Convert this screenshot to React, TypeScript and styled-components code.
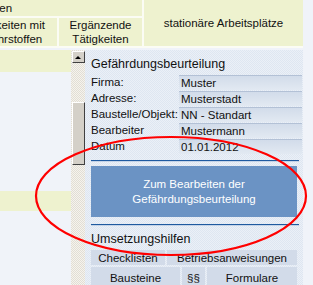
import { Fragment } from "react";
import styled, { createGlobalStyle } from "styled-components";

const GlobalStyle = createGlobalStyle`
  html, body {
    margin: 0;
    padding: 0;
    background: #f0f3f9;
  }
  body {
    font-family: "Liberation Sans", Arial, sans-serif;
    font-size: 11.5px;
    color: #111;
  }
`

const Screen = styled.div`
  position: relative;
  width: 313px;
  height: 285px;
  overflow: hidden;
  background: #f0f3f9;
`

// the table header is wider than the window, its left part is cut off
const Header = styled.div`
  display: grid;
  grid-template-columns: 130px 99px 83px 159px;
  grid-template-rows: 16px 28px;
  gap: 2px;
  margin-left: -174px;
  width: 477px;
  background: #fbfcf4;
  border-bottom: 2px solid #fbfcf4;
`

const HeadCell = styled.div<{ $span?: number }>`
  grid-column: span ${p => p.$span || 1};
  background: #eef2cf;
  display: flex;
  align-items: center;
  justify-content: center;
  text-align: center;
  line-height: 14px;
  white-space: nowrap;
`

const TallHeadCell = styled(HeadCell)`
  grid-column: 4;
  grid-row: 1 / 3;
`

const Body = styled.div`
  display: flex;
  flex-direction: row;
  height: 239px;
  padding-top: 2px;
`

const LeftTable = styled.div`
  width: 71px;
  display: flex;
  flex-direction: column;
  gap: 1px;
`

const Row = styled.div<{ $h: number; $yellow?: boolean }>`
  height: ${p => p.$h}px;
  flex-shrink: 0;
  background: ${p => (p.$yellow ? "#eef2cf" : "#f0f3f9")};
`

const ScrollTrack = styled.div`
  width: 14px;
  display: flex;
  flex-direction: column;
  align-items: center;
  padding-top: 1px;
  background-color: #f5f3ee;
  background-image: conic-gradient(#e2ded4 25%, transparent 0 50%, #e2ded4 0 75%, transparent 0);
  background-size: 2px 2px;
`

const ScrollButton = styled.div`
  width: 13px;
  height: 12px;
  box-sizing: border-box;
  background: #d4d0c8;
  border-top: 1px solid #fff;
  border-left: 1px solid #fff;
  border-right: 1px solid #404040;
  border-bottom: 1px solid #404040;
  display: flex;
  align-items: center;
  justify-content: center;
  &::after {
    content: "";
    border-left: 3px solid transparent;
    border-right: 3px solid transparent;
    border-bottom: 3px solid #000;
  }
`

const ScrollThumb = styled.div`
  width: 13px;
  height: 63px;
  margin-top: 39px;
  box-sizing: border-box;
  background: #d4d0c8;
  border-top: 1px solid #fff;
  border-left: 1px solid #fff;
  border-right: 1px solid #404040;
  border-bottom: 1px solid #404040;
`

const Panel = styled.div`
  width: 218px;
  padding: 6px 1px 0 6px;
  box-sizing: border-box;
  display: flex;
  flex-direction: column;
  background-color: #ebf0f7;
  background-image: conic-gradient(#dee6f1 25%, transparent 0 50%, #dee6f1 0 75%, transparent 0);
  background-size: 2px 2px;
`

const SectionTitle = styled.div<{ $top?: number }>`
  font-size: 12.5px;
  line-height: 16px;
  height: 16px;
  margin-top: ${p => p.$top || 0}px;
  color: #111;
`

const Fields = styled.div`
  display: grid;
  grid-template-columns: 88px 1fr;
  grid-auto-rows: 16px;
  margin-top: 2px;
`

const Label = styled.div`
  line-height: 16px;
  white-space: nowrap;
`

const Value = styled.div`
  height: 15px;
  margin-top: 1px;
  line-height: 15px;
  padding-left: 2px;
  box-sizing: border-box;
  border-top: 1px solid #b3c1d6;
  background: linear-gradient(#d2dcea, #e2e9f2);
  white-space: nowrap;
`

const Divider = styled.div<{ $top: number }>`
  height: 1px;
  margin: ${p => p.$top}px 3px 0 0;
  background: #1f5aa0;
  border-bottom: 1px solid #c4d3e7;
`

const EditButton = styled.button`
  margin: 4px 5px 0 0;
  height: 52px;
  border: none;
  background: #6b93c4;
  color: #fff;
  font-family: inherit;
  font-size: 11.5px;
  line-height: 15px;
  text-align: center;
  padding: 0;
`

const Tabs = styled.div<{ $cols: string; $top: number; $h: number }>`
  display: grid;
  grid-template-columns: ${p => p.$cols};
  grid-auto-rows: ${p => p.$h}px;
  gap: 2px;
  margin-right: 5px;
  margin-top: ${p => p.$top}px;
  flex-shrink: 0;
`

const Tab = styled.div`
  background: #d2dbe9;
  display: flex;
  align-items: center;
  justify-content: center;
  white-space: nowrap;
`

const Overlay = styled.svg`
  position: absolute;
  left: 0;
  top: 0;
  pointer-events: none;
`

const fields = [
  ["Firma:", "Muster"],
  ["Adresse:", "Musterstadt"],
  ["Baustelle/Objekt:", "NN - Standart"],
  ["Bearbeiter", "Mustermann"],
  ["Datum", "01.01.2012"],
]

export default function App() {
  return (
    <Screen>
      <GlobalStyle />
      <Header>
        <HeadCell $span={3}>Tätigkeiten</HeadCell>
        <TallHeadCell>stationäre Arbeitsplätze</TallHeadCell>
        <HeadCell>Tätigkeiten ohne<br />Gefahrstoffe</HeadCell>
        <HeadCell>Tätigkeiten mit<br />Gefahrstoffen</HeadCell>
        <HeadCell>Ergänzende<br />Tätigkeiten</HeadCell>
      </Header>
      <Body>
        <LeftTable>
          <Row $h={22} $yellow />
          <Row $h={117} />
          <Row $h={20} $yellow />
          <Row $h={80} />
        </LeftTable>
        <ScrollTrack>
          <ScrollButton />
          <ScrollThumb />
        </ScrollTrack>
        <Panel>
          <SectionTitle>Gefährdungsbeurteilung</SectionTitle>
          <Fields>
            {fields.map(([label, value]) => (
              <Fragment key={label}>
                <Label>{label}</Label>
                <Value>{value}</Value>
              </Fragment>
            ))}
          </Fields>
          <Divider $top={6} />
          <EditButton>
            Zum Bearbeiten der
            <br />
            Gefährdungsbeurteilung
          </EditButton>
          <Divider $top={7} />
          <SectionTitle $top={5}>Umsetzungshilfen</SectionTitle>
          <Tabs $cols="74px 1fr" $top={3} $h={15}>
            <Tab>Checklisten</Tab>
            <Tab>Betriebsanweisungen</Tab>
          </Tabs>
          <Tabs $cols="89px 23px 1fr" $top={2} $h={22}>
            <Tab>Bausteine</Tab>
            <Tab>§§</Tab>
            <Tab>Formulare</Tab>
          </Tabs>
        </Panel>
      </Body>
      <Overlay width="313" height="285" viewBox="0 0 313 285">
        <ellipse cx="171" cy="196" rx="135" ry="59" fill="none" stroke="#ff0000" strokeWidth="2.2" />
      </Overlay>
    </Screen>
  )
}
